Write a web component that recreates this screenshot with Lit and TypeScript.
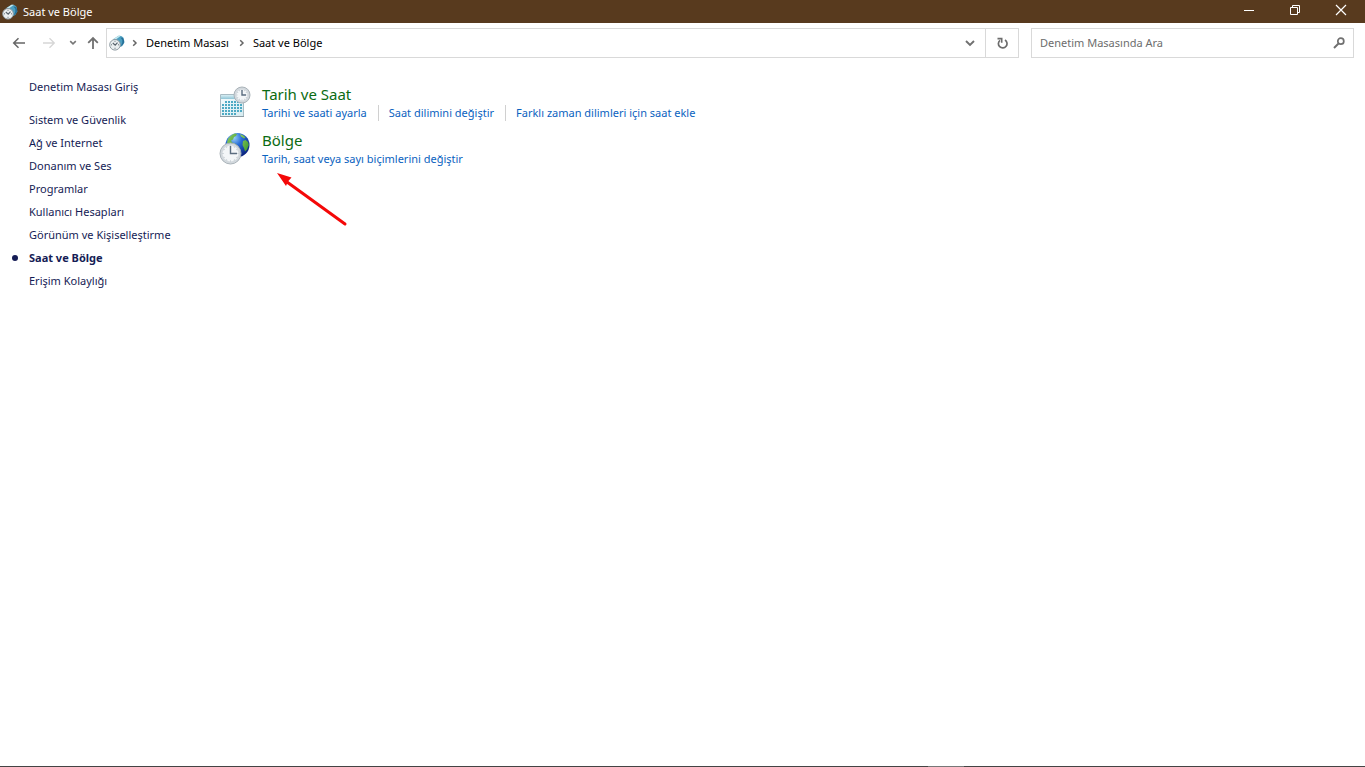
import { LitElement, html, css, svg } from "lit";
import { customElement } from "lit/decorators.js";
import { classMap } from "lit/directives/class-map.js";

const categories = [
  "Sistem ve Güvenlik",
  "Ağ ve Internet",
  "Donanım ve Ses",
  "Programlar",
  "Kullanıcı Hesapları",
  "Görünüm ve Kişiselleştirme",
  "Saat ve Bölge",
  "Erişim Kolaylığı",
];
const current = "Saat ve Bölge";

const chevronRight = html`<svg class="crumb-sep" width="8" height="10" viewBox="0 0 8 10" aria-hidden="true">
  <path d="M2.2 2.2 5 5 2.2 7.8" fill="none" stroke="#666" stroke-width="1.5" />
</svg>`;

const smallClock = () => html`<svg width="16" height="16" viewBox="0 0 16 16" aria-hidden="true">
  <path d="M4.500 4 9.500.8q3-.6 5 2l.8 4.500-2 3.700-4.300 2-4-4z" fill="#4c9fc0" />
  <path d="M4.500 4 9.500.8l2.500-.1L7.500 4z" fill="#c4e8ef" />
  <path d="M11.500 2.500q2 1.500 1.800 5l-1.500 4 2.700-2.500.8-3-1.300-3z" fill="#276f98" />
  <circle cx="6" cy="9.800" r="5.300" fill="#e9eef0" stroke="#8f9ba2" />
  <path d="M6 5.800v1M6 12.800v1M2 9.800h1M9 9.800h1" stroke="#68757d" />
  <path d="M3.800 8 6.200 10.200 8.500 7.600" fill="none" stroke="#56626b" stroke-width="1.100" />
</svg>`;

const clockFace = (cx: number, cy: number, r: number) => svg`
  <circle cx=${cx} cy=${cy} r=${r} fill="#d3d9de" stroke="#aab3b9" />
  <circle cx=${cx} cy=${cy} r=${r - 2} fill="#f3f6f8" stroke="#c9d0d5" stroke-width=".6" />
  <circle cx=${cx} cy=${cy} r=${r - 3} fill="none" stroke="#a5b0b8" stroke-width="1"
    pathLength="24" stroke-dasharray=".5 1.500" stroke-dashoffset=".25" />
  <path d="M${cx} ${cy - r + 3}V${cy}H${cx + r - 4}" fill="none" stroke="#5b6d80" stroke-width="1.400" />`;

const dots: [number, number][] = [];
for (let row = 0; row < 5; row++) {
  for (let col = 0; col < 7; col++) {
    if ((row === 0 && col < 1) || (row === 4 && col > 4)) continue;
    dots.push([3 + col * 3, 14 + row * 3]);
  }
}

const calendarIcon = html`<svg width="32" height="32" viewBox="0 -1 32 32" aria-hidden="true">
  <defs>
    <linearGradient id="head" x1="0" y1="0" x2="0" y2="1">
      <stop offset="0" stop-color="#d8eef4" /><stop offset="1" stop-color="#8fc4d6" />
    </linearGradient>
    <linearGradient id="sheet" x1="0" y1="0" x2="1" y2="1">
      <stop offset="0" stop-color="#f6fcfd" /><stop offset="1" stop-color="#d5ebf1" />
    </linearGradient>
  </defs>
  <path d="M1.500 7.500h23v22h-23z" fill="url(#sheet)" stroke="#a9bcc4" />
  <path d="M2 8h22v4H2z" fill="url(#head)" />
  <path d="M1 29.500h24" stroke="#8b9ba3" />
  ${dots.map(([x, y]) => svg`<rect x=${x} y=${y} width="2" height="2" fill="#4eaac4" />`)}
  ${clockFace(23, 8, 8)}
</svg>`;

const globeIcon = html`<svg width="32" height="34" viewBox="0 0 32 34" aria-hidden="true">
  <defs>
    <radialGradient id="sea" cx=".35" cy=".2" r=".8">
      <stop offset="0" stop-color="#9bd2f8" /><stop offset=".4" stop-color="#2a6fd8" /><stop offset="1" stop-color="#0a2480" />
    </radialGradient>
    <linearGradient id="land" x1="0" y1="0" x2="1" y2="1">
      <stop offset="0" stop-color="#8fcb62" /><stop offset="1" stop-color="#3a9a2c" />
    </linearGradient>
  </defs>
  <circle cx="18.500" cy="13" r="12" fill="url(#sea)" />
  <path d="M9 7q3-4.500 7-5.500l2 .5-1 2-2 1-1 2.500-2 1 1 2 4 1.500 1.500 2.500-1.500 3-2 2-5-6-2-3z" fill="url(#land)" />
  <path d="M21 2q4 1 5.500 3.500l-1.500 1-3-2zM24 9l2.500-1 2.500 2 .8 3-1.800 4.500-2 2-1-3.500-1.500-3z" fill="url(#land)" />
  ${clockFace(11.5, 21.5, 10.5)}
</svg>`;

@customElement("app-root")
export class AppRoot extends LitElement {
  static styles = css`
    :host {
      display: flex;
      flex-direction: column;
      min-height: 100vh;
      box-sizing: border-box;
      position: relative;
      background: #fff;
      color: #000;
      font: 11px/16px "Segoe UI", "Noto Sans", "Open Sans", sans-serif;
    }
    svg { display: block; flex: none; }
    a { text-decoration: none; color: inherit; }
    a:hover { text-decoration: underline; }
    button { border: 0; padding: 0; background: none; display: grid; place-items: center; }
    .titlebar { display: flex; align-items: center; height: 23px; padding-right: 1px; background: #583a1e; color: #fff; }
    .titlebar h1 { margin: 0; flex: 1; font: inherit; }
    .app-icon { margin: 0 5px 0 2px; }
    .window-button { width: 46px; height: 23px; padding-bottom: 3px; }
    .toolbar { display: flex; align-items: center; padding: 5px 11px 5px 8px; }
    .nav { display: flex; align-items: center; width: 98px; }
    .nav button { height: 28px; }
    .arrow { width: 22px; }
    .forward { margin-left: 8px; }
    .recent { width: 14px; margin-left: 6px; }
    .up { width: 20px; margin-left: 3px; }
    .address { display: flex; flex: 1; align-items: center; height: 28px; border: 1px solid #d9d9d9; margin-right: 12px; }
    .crumbs { display: flex; flex: 1; align-items: center; padding-left: 2px; }
    .crumbs a { padding-right: 3px; }
    .crumb-sep { margin: 0 7px 0 6px; }
    .drop { width: 30px; height: 28px; }
    .refresh { width: 33px; height: 28px; border-left: 1px solid #d9d9d9; }
    .search { display: flex; align-items: center; box-sizing: border-box; width: 323px; height: 30px; border: 1px solid #d9d9d9; padding: 0 8px; }
    .search input { flex: 1; min-width: 0; border: 0; padding: 0; outline: 0; font: inherit; color: #000; background: none; }
    .search input::placeholder { color: #6d6d6d; opacity: 1; }
    .body { display: flex; flex: 1; padding-top: 12px; }
    .sidebar { width: 219px; color: #151c55; line-height: 23px; }
    .sidebar ul { list-style: none; margin: 10px 0 0; padding: 0; }
    .home, .sidebar li { display: flex; align-items: center; height: 23px; padding-left: 29px; }
    .sidebar li.current { padding-left: 12px; gap: 11px; font-weight: 700; }
    .bullet { width: 6px; height: 6px; border-radius: 50%; background: #151c55; }
    main { flex: 1; padding-top: 9px; }
    .item { display: flex; gap: 11px; height: 46px; }
    .item svg { margin-top: 2px; }
    .item h2 { margin: 0 0 1px; font-size: 15px; line-height: 20px; font-weight: 400; color: #0b6b12; }
    .tasks { display: flex; align-items: center; color: #0a62c0; }
    .tasks a + a { border-left: 1px solid #d0d0d0; margin-left: 11px; padding-left: 10px; }
    .edge { display: flex; height: 1px; background: #444; }
    .edge span { width: 36px; margin-left: 68%; background: #777; }
    .pointer { position: absolute; left: 275px; top: 170px; pointer-events: none; }
  `;

  render() {
    return html`
      <header class="titlebar">
        <span class="app-icon">${smallClock()}</span>
        <h1>Saat ve Bölge</h1>
        <button class="window-button" aria-label="Simge durumuna küçült">
          <svg width="12" height="12" viewBox="0 0 12 12"><path d="M1 6.500h10" stroke="#fff" /></svg>
        </button>
        <button class="window-button" aria-label="Geri yükle">
          <svg width="12" height="12" viewBox="0 0 12 12"><path d="M1.500 3.500h7v7h-7zM3.500 3.500v-2h7v7h-2" fill="none" stroke="#fff" /></svg>
        </button>
        <button class="window-button" aria-label="Kapat">
          <svg width="12" height="12" viewBox="0 0 12 12"><path d="m1 1 10 10M11 1 1 11" stroke="#fff" stroke-width="1.200" /></svg>
        </button>
      </header>
      <div class="toolbar">
        <nav class="nav" aria-label="Gezinti">
          <button class="arrow" aria-label="Geri">
            <svg width="14" height="12" viewBox="0 0 14 12"><path d="M13 6H2M6.500 1.200 1.700 6l4.800 4.800" fill="none" stroke="#666" stroke-width="1.500" /></svg>
          </button>
          <button class="arrow forward" aria-label="İleri" disabled>
            <svg width="14" height="12" viewBox="0 0 14 12"><path d="M1 6h11M7.500 1.200 12.300 6l-4.800 4.800" fill="none" stroke="#d6d6d6" stroke-width="1.300" /></svg>
          </button>
          <button class="recent" aria-label="Son konumlar">
            <svg width="8" height="6" viewBox="0 0 8 6"><path d="M1.200 1.200 4 3.900l2.800-2.700" fill="none" stroke="#777" stroke-width="1.600" /></svg>
          </button>
          <button class="up" aria-label="Yukarı">
            <svg width="12" height="14" viewBox="0 0 12 14"><path d="M6 13V2M1.200 6.800 6 2l4.800 4.800" fill="none" stroke="#707070" stroke-width="1.800" /></svg>
          </button>
        </nav>
        <div class="address">
          <div class="crumbs">
            ${smallClock()}${chevronRight}<a href="#home">Denetim Masası</a>${chevronRight}<a href="#clock">Saat ve Bölge</a>
          </div>
          <button class="drop" aria-label="Önceki konumlar">
            <svg width="10" height="8" viewBox="0 0 10 8"><path d="M1 2l4 4 4-4" fill="none" stroke="#707070" stroke-width="1.900" /></svg>
          </button>
          <button class="refresh" aria-label="Yenile">
            <svg width="12" height="12" viewBox="0 0 12 12">
              <path d="M9 3A4.300 4.300 0 1 1 4 3.300" fill="none" stroke="#6c6c6c" stroke-width="1.700" />
              <path d="M1.500 1.600h4.200v4.200" fill="none" stroke="#6c6c6c" stroke-width="1.600" />
            </svg>
          </button>
        </div>
        <label class="search">
          <input type="text" aria-label="Denetim Masasında Ara" placeholder="Denetim Masasında Ara" />
          <svg width="12" height="12" viewBox="0 0 12 12" aria-hidden="true">
            <circle cx="7.800" cy="4.200" r="3" fill="none" stroke="#707070" stroke-width="1.700" />
            <path d="M5.500 6.500 1 11" stroke="#707070" stroke-width="2" />
          </svg>
        </label>
      </div>
      <div class="body">
        <nav class="sidebar" aria-label="Kategoriler">
          <div class="home"><a href="#home">Denetim Masası Giriş</a></div>
          <ul>
            ${categories.map(
              (name) => html`<li class=${classMap({ current: name === current })}>
                ${name === current ? html`<span class="bullet"></span>` : ""}<a href="#category">${name}</a>
              </li>`
            )}
          </ul>
        </nav>
        <main>
          <section class="item">
            ${calendarIcon}
            <div>
              <h2><a href="#date">Tarih ve Saat</a></h2>
              <div class="tasks">
                <a href="#set">Tarihi ve saati ayarla</a><a href="#zone">Saat dilimini değiştir</a><a href="#clocks">Farklı zaman dilimleri için saat ekle</a>
              </div>
            </div>
          </section>
          <section class="item">
            ${globeIcon}
            <div>
              <h2><a href="#region">Bölge</a></h2>
              <div class="tasks"><a href="#formats">Tarih, saat veya sayı biçimlerini değiştir</a></div>
            </div>
          </section>
        </main>
      </div>
      <div class="edge"><span></span></div>
      <svg class="pointer" width="74" height="58" viewBox="0 0 74 58" aria-hidden="true">
        <path d="M12 12 70 54" stroke="#f40808" stroke-width="3" stroke-linecap="round" />
        <path d="M2 3 16.500 7.500 13 11.500l-2 4.500z" fill="#f40808" />
      </svg>
    `;
  }
}
